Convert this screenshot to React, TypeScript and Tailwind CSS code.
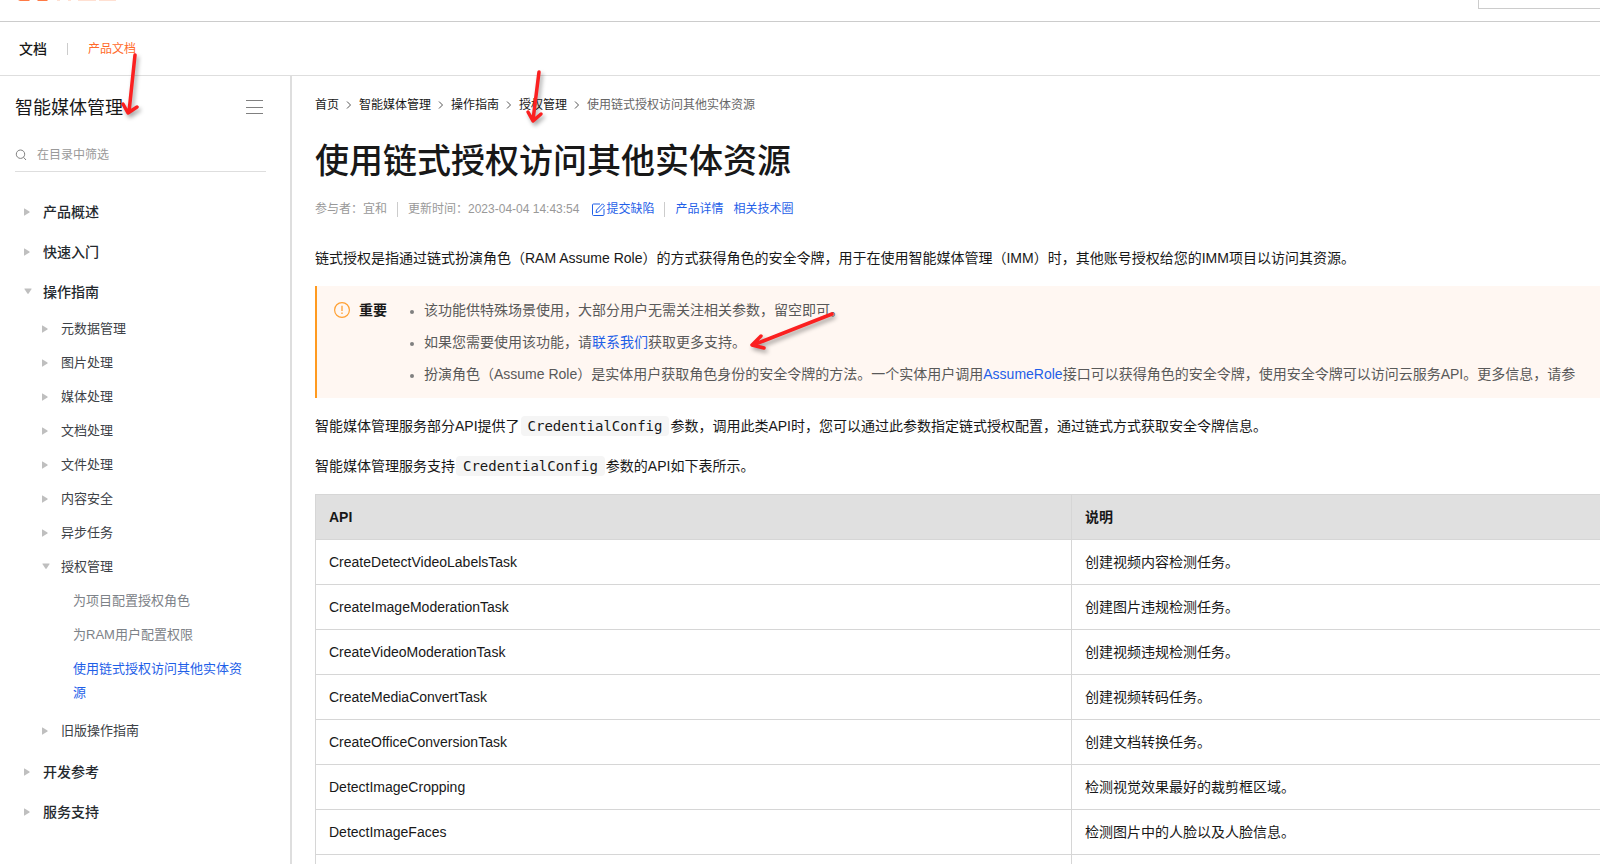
import { Fragment, ReactNode } from "react";

/* ---------------- Data ---------------- */

interface TreeNode {
  title: string;
  active?: boolean;
  children?: TreeNode[];
}

const TREE: TreeNode[] = [
  { title: "产品概述" },
  { title: "快速入门" },
  {
    title: "操作指南",
    children: [
      { title: "元数据管理" },
      { title: "图片处理" },
      { title: "媒体处理" },
      { title: "文档处理" },
      { title: "文件处理" },
      { title: "内容安全" },
      { title: "异步任务" },
      {
        title: "授权管理",
        children: [
          { title: "为项目配置授权角色" },
          { title: "为RAM用户配置权限" },
          { title: "使用链式授权访问其他实体资源", active: true },
        ],
      },
      { title: "旧版操作指南" },
    ],
  },
  { title: "开发参考" },
  { title: "服务支持" },
];

const CRUMBS = ["首页", "智能媒体管理", "操作指南", "授权管理"];

const API_ROWS = [
  ["CreateDetectVideoLabelsTask", "创建视频内容检测任务。"],
  ["CreateImageModerationTask", "创建图片违规检测任务。"],
  ["CreateVideoModerationTask", "创建视频违规检测任务。"],
  ["CreateMediaConvertTask", "创建视频转码任务。"],
  ["CreateOfficeConversionTask", "创建文档转换任务。"],
  ["DetectImageCropping", "检测视觉效果最好的裁剪框区域。"],
  ["DetectImageFaces", "检测图片中的人脸以及人脸信息。"],
  ["", ""],
];

/* ---------------- Icons ---------------- */

const Caret = ({ open }: { open: boolean }) => (
  <svg className="size-2 shrink-0" viewBox="0 0 8 8" fill="#bfbfbf" aria-hidden="true">
    {open ? (
      <path d="M.8.5h6.400q.7 0 .4.600L4.600 5.600q-.6.700-1.200 0L.4 1.100Q.1.500.8.500z" />
    ) : (
      <path d="M0 .8q0-.7.6-.4L5.400 3.400q.7.600 0 1.200L.6 7.600Q0 7.900 0 7.200z" />
    )}
  </svg>
);

const CrumbArrow = () => (
  <svg className="w-5 h-3" viewBox="0 0 20 12" fill="none" stroke="#555" aria-hidden="true">
    <path d="M8 2.500 11.500 6 8 9.500" />
  </svg>
);

const SearchIcon = () => (
  <svg className="size-3 shrink-0" viewBox="0 0 12 12" fill="none" stroke="#808080" aria-hidden="true">
    <circle cx="5.500" cy="5.200" r="4.200" />
    <path d="m8.500 8.300 2.500 2.700" />
  </svg>
);

const EditIcon = () => (
  <svg className="size-[15px]" viewBox="0 0 15 15" fill="none" stroke="#1f5fe8" aria-hidden="true">
    <path d="M9 2H2.500Q1.500 2 1.500 3v9.500q0 1 1 1H12q1 0 1-1V7" />
    <path d="M5 10.500 5.500 8 11.500 1.800l2 2L7.500 10z" />
  </svg>
);

const WarningIcon = () => (
  <svg className="size-4 shrink-0" viewBox="0 0 16 16" fill="none" stroke="#ffa033" aria-hidden="true">
    <circle cx="8" cy="8" r="7.400" strokeWidth="1.200" />
    <path d="M8 3.800v5.200M8 10.600v1.500" strokeWidth="1.300" />
  </svg>
);

const LogoMark = () => (
  <svg className="block w-[120px] h-[2px]" viewBox="0 0 120 2" aria-hidden="true">
    <path d="M18 0h12l-1 1h-9zM37 0h11l-1 1h-9z" fill="#ff7a45" />
    <path d="M57 0h3v1h-3zM68 0h3v1h-3zM78 0h18v1H78zM99 0h17v1H99z" fill="#ffe0d2" />
  </svg>
);

/* ---------------- Sidebar ---------------- */

const LEVEL_STYLE = [
  "pl-6 gap-[11px] py-2 text-[14px] font-medium text-[#24292e]",
  "pl-[42px] gap-[11px] py-[5px] text-[13px] text-[#3d4247]",
  "pl-[73px] py-[5px] text-[13px]",
];

const TreeList = ({ nodes, level = 0 }: { nodes: TreeNode[]; level?: number }) => (
  <ul className={level > 0 ? "pb-1" : "pt-5"}>
    {nodes.map((node) => (
      <li key={node.title}>
        <a
          href="#"
          className={`flex items-center pr-10 leading-6 ${LEVEL_STYLE[level]} ${
            level < 2 ? "" : node.active ? "text-[#1f5fe8]" : "text-[#7d8288]"
          }`}
        >
          {level < 2 && <Caret open={!!node.children} />}
          <span>{node.title}</span>
        </a>
        {node.children && <TreeList nodes={node.children} level={level + 1} />}
      </li>
    ))}
  </ul>
);

const Sidebar = () => (
  <aside className="w-[292px] shrink-0 border-r-2 border-[#dedede]">
    <div className="pl-[15px] pr-6">
      <div className="flex items-center justify-between h-16">
        <h2 className="text-[18px] leading-6 text-[#181818]">智能媒体管理</h2>
        <button type="button" aria-label="收起目录" className="pr-[3px] pb-[2px]">
          <svg className="w-[17px] h-[14px]" viewBox="0 0 17 14" stroke="#808080" aria-hidden="true">
            <path d="M0 .5h17M0 7.500h17M0 13.500h17" />
          </svg>
        </button>
      </div>
      <label className="flex items-center gap-[10px] h-8 pb-[2px] border-b border-[#dedede]">
        <SearchIcon />
        <input
          type="text"
          aria-label="在目录中筛选"
          placeholder="在目录中筛选"
          className="w-full text-[12px] outline-none placeholder:text-[#999]"
        />
      </label>
    </div>
    <TreeList nodes={TREE} />
  </aside>
);

/* ---------------- Article ---------------- */

const Link = ({ children }: { children: ReactNode }) => (
  <a href="#" className="text-[#1f5fe8]">
    {children}
  </a>
);

const Code = ({ children }: { children: ReactNode }) => (
  <code className="mx-px px-[7px] py-[2px] rounded bg-[#f5f5f5] font-['DejaVu_Sans_Mono',monospace] text-[14px]">
    {children}
  </code>
);

const Article = () => (
  <main className="flex-1 min-w-0 pl-[23px] overflow-hidden text-[14px] text-[#181818]">
    <nav className="flex items-center h-[22px] mt-[18px] text-[12px]">
      {CRUMBS.map((crumb) => (
        <Fragment key={crumb}>
          <a href="#">{crumb}</a>
          <CrumbArrow />
        </Fragment>
      ))}
      <span className="text-[#666]">使用链式授权访问其他实体资源</span>
    </nav>

    <h1 className="mt-5 text-[34px] leading-[50px] font-medium">使用链式授权访问其他实体资源</h1>

    <div className="flex items-center h-5 mt-[13px] text-[12px] text-[#999]">
      <span>参与者：宜和</span>
      <span className="w-px h-[15px] mx-[10px] bg-[#ccc]" />
      <span>更新时间：2023-04-04 14:43:54</span>
      <a href="#" className="flex items-center ml-3 text-[#1f5fe8]">
        <EditIcon />
        提交缺陷
      </a>
      <span className="w-px h-[15px] mx-[10px] bg-[#ccc]" />
      <span className="flex gap-[10px]">
        <Link>产品详情</Link>
        <Link>相关技术圈</Link>
      </span>
    </div>

    <p className="mt-[27px] leading-6">
      链式授权是指通过链式扮演角色（RAM Assume Role）的方式获得角色的安全令牌，用于在使用智能媒体管理（IMM）时，其他账号授权给您的IMM项目以访问其资源。
    </p>

    <section className="flex mt-4 py-2 pl-[17px] border-l-2 border-[#ff9a1f] bg-[#fff7f2] leading-8 whitespace-nowrap">
      <div className="flex items-center h-8 gap-[9px] w-[90px] shrink-0">
        <WarningIcon />
        <strong>重要</strong>
      </div>
      <ul className="list-disc marker:text-[#808080] marker:text-[12px] text-[#595959]">
        <li>该功能供特殊场景使用，大部分用户无需关注相关参数，留空即可。</li>
        <li>
          如果您需要使用该功能，请<Link>联系我们</Link>获取更多支持。
        </li>
        <li>
          扮演角色（Assume Role）是实体用户获取角色身份的安全令牌的方法。一个实体用户调用
          <Link>AssumeRole</Link>接口可以获得角色的安全令牌，使用安全令牌可以访问云服务API。更多信息，请参
        </li>
      </ul>
    </section>

    <p className="mt-4 leading-6">
      智能媒体管理服务部分API提供了<Code>CredentialConfig</Code>
      参数，调用此类API时，您可以通过此参数指定链式授权配置，通过链式方式获取安全令牌信息。
    </p>
    <p className="mt-4 leading-6">
      智能媒体管理服务支持<Code>CredentialConfig</Code>参数的API如下表所示。
    </p>

    <table className="w-full mt-4 table-fixed border-collapse text-left">
      <thead>
        <tr className="h-[45px] bg-[#e0e0e0]">
          <th className="w-[756px] px-[13px] border border-[#d6d6d6]">API</th>
          <th className="px-[13px] border border-r-0 border-[#d6d6d6]">说明</th>
        </tr>
      </thead>
      <tbody>
        {API_ROWS.map(([api, desc]) => (
          <tr key={api} className="h-[45px]">
            <td className="px-[13px] border border-[#d6d6d6]">{api}</td>
            <td className="px-[13px] border border-r-0 border-[#d6d6d6]">{desc}</td>
          </tr>
        ))}
      </tbody>
    </table>
  </main>
);

/* ---------------- Annotation arrows ---------------- */

const Arrows = () => (
  <svg
    className="absolute top-0 left-0 w-[860px] h-[360px] pointer-events-none drop-shadow-[2px_3px_2px_rgba(0,0,0,0.35)]"
    viewBox="0 0 860 360"
    fill="none"
    stroke="#fb2020"
    strokeWidth="3.500"
    strokeLinecap="round"
    strokeLinejoin="round"
    aria-hidden="true"
  >
    <path d="M135 55 129 112M123 104l5 9 9-6" />
    <path d="M539 72 533 120M528 112l5 9 8-7" />
    <path d="M832 314 753 345M761 336l-9 9 12 3" />
  </svg>
);

/* ---------------- Page ---------------- */

const App = () => {
  return (
    <div className="relative flex flex-col h-screen overflow-hidden bg-white font-['Liberation_Sans','Noto_Sans_CJK_SC',sans-serif]">
      <header className="flex justify-between h-[22px] shrink-0 border-b border-[#ccc]">
        <LogoMark />
        <div className="w-[122px] h-[9px] border-l border-b border-[#ccc]" />
      </header>

      <nav className="flex items-center h-[54px] pl-[19px] pt-px shrink-0 border-b border-[#dedede]">
        <a href="#" className="text-[14px] font-medium text-[#181818]">
          文档
        </a>
        <span className="w-px h-3 mx-5 bg-[#ccc]" />
        <a href="#" className="text-[12px] text-[#ff6a2b]">
          产品文档
        </a>
      </nav>

      <div className="flex flex-1 min-h-0">
        <Sidebar />
        <Article />
      </div>

      <Arrows />
    </div>
  );
};

export default App;
